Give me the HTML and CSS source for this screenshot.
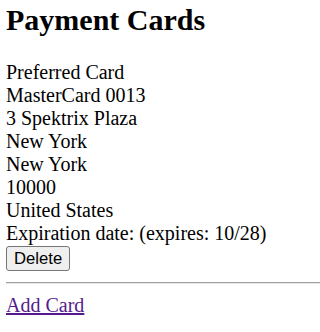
FILE: index.html
```html
<!DOCTYPE html>
<html>
<head>
<meta charset="utf-8">
<link rel="stylesheet" href="styles.css">
</head>
<body>
<h1 class="title">Payment Cards</h1>
<div class="card">
  <div>Preferred Card</div>
  <div>MasterCard 0013</div>
  <div>3 Spektrix Plaza</div>
  <div>New York</div>
  <div>New York</div>
  <div>10000</div>
  <div>United States</div>
  <div>Expiration date: (expires: 10/28)</div>
  <button class="btn" type="button">Delete</button>
</div>
<hr class="rule">
<a class="add" href="#">Add Card</a>
</body>
</html>
```
FILE: styles.css
```css
body {
  margin: 0 0 0 6px;
  font-family: "Liberation Serif", "Times New Roman", serif;
  font-size: 20px;
  line-height: 23px;
  color: #000;
}
.title {
  font-size: 30px;
  line-height: 35px;
  margin: 2px 0 24px;
}
.btn {
  display: block;
  margin: 1px 0 0;
  font-family: "Liberation Sans", Arial, sans-serif;
  font-size: 16.67px;
  line-height: 19px;
  padding: 2px 7px;
  border: 1px solid #767676;
  border-radius: 3px;
  background: #efefef;
  color: #000;
}
.rule {
  margin: 11px 0 10px;
  border: 0;
  border-top: 1px solid #a0a0a0;
  border-bottom: 1px solid #e6e6e6;
}
.add {
  color: #551a8b;
}
```
